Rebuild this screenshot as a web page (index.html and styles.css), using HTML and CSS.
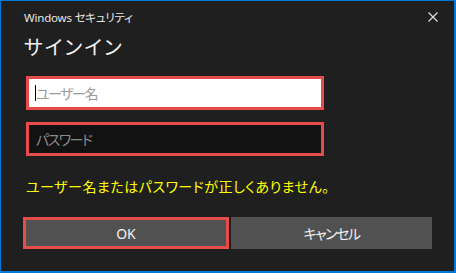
FILE: index.html
```html
<!DOCTYPE html>
<html lang="ja">
<head>
    <meta charset="UTF-8">
    <title>Windows セキュリティ</title>
    <link rel="stylesheet" href="styles.css">
</head>
<body>
    <div class="dialog">
        <div class="titlebar">
            <span class="title">Windows セキュリティ</span>
            <svg class="close" width="10" height="10" viewBox="0 0 10 10">
                <path d="M0.5 0.5 L9.5 9.5 M9.5 0.5 L0.5 9.5" stroke="#e0e0e0" stroke-width="1.2" fill="none"/>
            </svg>
        </div>
        <h2 class="heading">サインイン</h2>
        <div class="field">
            <input type="text" class="user" placeholder="ユーザー名">
            <span class="caret"></span>
        </div>
        <div class="field">
            <input type="password" class="pass" placeholder="パスワード">
        </div>
        <p class="error">ユーザー名またはパスワードが正しくありません。</p>
        <div class="buttons">
            <button class="btn ok">OK</button>
            <button class="btn cancel">キャンセル</button>
        </div>
    </div>
</body>
</html>
```

FILE: styles.css
```css
body {
    margin: 0;
    padding: 0;
    font-family: "Noto Sans", "Noto Sans CJK JP", sans-serif;
    font-feature-settings: "palt";
    background: #1f1f1f;
}
.dialog {
    width: 456px;
    height: 273px;
    box-sizing: border-box;
    border-style: solid;
    border-color: #0078d7;
    border-width: 1px 2px 2px 1px;
    background: #1f1f1f;
    padding: 0 0 0 23px;
}
.titlebar {
    display: flex;
    align-items: center;
    justify-content: space-between;
    height: 32px;
    padding-right: 16px;
}
.title {
    color: #e6e6e6;
    font-size: 11.5px;
    letter-spacing: -0.2px;
}
.close {
    display: block;
}
.heading {
    margin: 0;
    height: 30px;
    line-height: 30px;
    font-size: 20px;
    font-weight: normal;
    letter-spacing: 2px;
    color: #f2f2f2;
}
.field {
    position: relative;
    margin: 13px 0 0 2px;
    width: 298px;
}
.field + .field {
    margin-top: 12px;
}
.field input {
    display: block;
    width: 100%;
    height: 34px;
    box-sizing: border-box;
    border: 3px solid #e84c48;
    padding: 0 7px;
    font-family: inherit;
    font-feature-settings: "palt";
    font-size: 14px;
    letter-spacing: -1.5px;
    outline: none;
}
.user {
    background: #ffffff;
}
.user::placeholder {
    color: #9a9a9a;
}
.pass {
    background: #121212;
    padding-left: 6px;
}
.pass::placeholder {
    color: #8a8a8a;
}
.caret {
    position: absolute;
    left: 9px;
    top: 9px;
    width: 1px;
    height: 16px;
    background: #000;
}
.error {
    margin: 21px 0 0 2px;
    height: 20px;
    line-height: 20px;
    font-size: 14px;
    letter-spacing: 0.5px;
    color: #ffff00;
}
.buttons {
    display: flex;
    gap: 2px;
    margin: 20px 0 0 -1px;
}
.btn {
    height: 32px;
    box-sizing: border-box;
    border: none;
    background: #515151;
    color: #f2f2f2;
    font-family: inherit;
    font-feature-settings: "palt";
    font-size: 14px;
    padding: 0;
}
.ok {
    width: 206px;
    border: 3px solid #e84c48;
}
.cancel {
    width: 201px;
    letter-spacing: -1.5px;
}
```
